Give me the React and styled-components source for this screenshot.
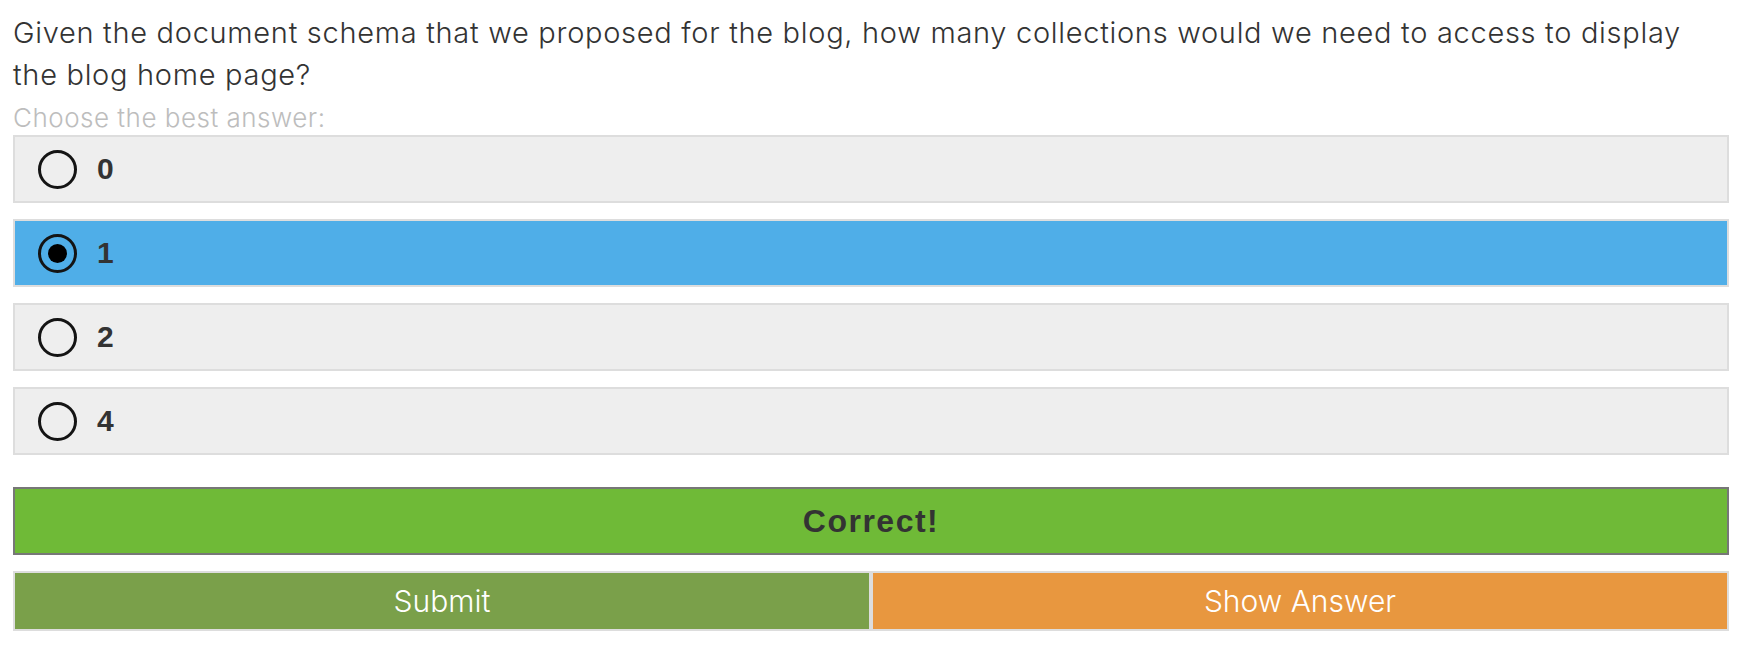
import React from "react";
import styled, { createGlobalStyle } from "styled-components";

const COLORS = {
  text: "#333333",
  hint: "#bdbdbd",
  option: "#eeeeee",
  optionBorder: "#dddddd",
  selected: "#4faee8",
  correct: "#6fba37",
  correctBorder: "#777777",
  submit: "#7aa04a",
  showAnswer: "#e8973f",
};

const OPTIONS = ["0", "1", "2", "4"];

const GlobalStyle = createGlobalStyle`
  body {
    margin: 0;
    background: #ffffff;
    font-family: "Liberation Sans", Arial, sans-serif;
  }
`;

const Quiz = ({ selected = "1" }) => {
  return (
    <Wrapper>
      <Question>
        Given the document schema that we proposed for the blog, how many
        collections would we need to access to display
        <br />
        the blog home page?
      </Question>
      <Hint>Choose the best answer:</Hint>
      <OptionList>
        {OPTIONS.map((opt) => (
          <Option key={opt} active={opt === selected}>
            <Radio checked={opt === selected} />
            <OptionLabel>{opt}</OptionLabel>
          </Option>
        ))}
      </OptionList>
      <Result>Correct!</Result>
      <Actions>
        <ActionButton bg={COLORS.submit}>Submit</ActionButton>
        <ActionButton bg={COLORS.showAnswer}>Show Answer</ActionButton>
      </Actions>
    </Wrapper>
  );
};

const Wrapper = styled.div`
  width: 1716px;
  margin-left: 13px;
  padding-top: 12px;
  display: flex;
  flex-direction: column;
`;

const Question = styled.p`
  margin: 0;
  font-family: Inter, "Liberation Sans", sans-serif;
  font-weight: 300;
  font-size: 29px;
  letter-spacing: 0.7px;
  line-height: 42px;
  color: ${COLORS.text};
  white-space: nowrap;
`;

const Hint = styled.div`
  margin-top: 4px;
  font-family: Inter, "Liberation Sans", sans-serif;
  font-weight: 300;
  font-size: 26px;
  letter-spacing: 0.5px;
  line-height: 35px;
  color: ${COLORS.hint};
`;

const OptionList = styled.div`
  display: flex;
  flex-direction: column;
  gap: 16px;
`;

const Option = styled.label`
  box-sizing: border-box;
  height: 68px;
  display: flex;
  align-items: center;
  gap: 20px;
  padding-left: 23px;
  background: ${(p) => (p.active ? COLORS.selected : COLORS.option)};
  border: 2px solid ${COLORS.optionBorder};
  cursor: pointer;
`;

const Radio = styled.span`
  box-sizing: border-box;
  width: 39px;
  height: 39px;
  border-radius: 50%;
  border: 3px solid #141414;
  display: flex;
  align-items: center;
  justify-content: center;
  filter: blur(0.4px);

  &::after {
    content: "";
    display: ${(p) => (p.checked ? "block" : "none")};
    width: 19px;
    height: 19px;
    border-radius: 50%;
    background: #000;
  }
`;

const OptionLabel = styled.span`
  font-size: 30px;
  font-weight: 700;
  color: #333;
`;

const Result = styled.div`
  box-sizing: border-box;
  margin-top: 32px;
  height: 68px;
  display: flex;
  align-items: center;
  justify-content: center;
  background: ${COLORS.correct};
  border: 2px solid ${COLORS.correctBorder};
  font-size: 32px;
  font-weight: 700;
  letter-spacing: 1.5px;
  color: #333;
`;

const Actions = styled.div`
  margin-top: 16px;
  display: grid;
  grid-template-columns: 1fr 1fr;
`;

const ActionButton = styled.button`
  box-sizing: border-box;
  height: 60px;
  padding: 0;
  background: ${(p) => p.bg};
  border: 2px solid ${COLORS.optionBorder};
  font-family: Inter, "Liberation Sans", sans-serif;
  font-weight: 300;
  font-size: 30px;
  color: #ffffff;
  cursor: pointer;
`;

const App = () => (
  <>
    <GlobalStyle />
    <Quiz selected="1" />
  </>
);

export default App;
